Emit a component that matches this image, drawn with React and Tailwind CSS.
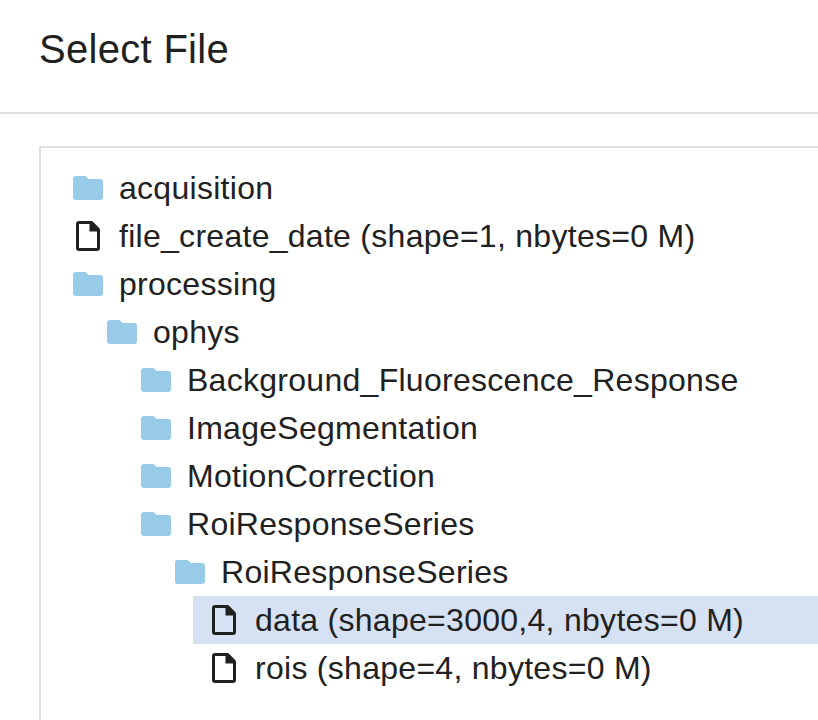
const rows = [
  { label: "acquisition", type: "folder", indent: "pl-[32px]" },
  { label: "file_create_date (shape=1, nbytes=0 M)", type: "file", indent: "pl-[32px]" },
  { label: "processing", type: "folder", indent: "pl-[32px]" },
  { label: "ophys", type: "folder", indent: "pl-[66px]" },
  { label: "Background_Fluorescence_Response", type: "folder", indent: "pl-[100px]" },
  { label: "ImageSegmentation", type: "folder", indent: "pl-[100px]" },
  { label: "MotionCorrection", type: "folder", indent: "pl-[100px]" },
  { label: "RoiResponseSeries", type: "folder", indent: "pl-[100px]" },
  { label: "RoiResponseSeries", type: "folder", indent: "pl-[134px]" },
  { label: "data (shape=3000,4, nbytes=0 M)", type: "file", indent: "ml-[152px] pl-[16px]", selected: true },
  { label: "rois (shape=4, nbytes=0 M)", type: "file", indent: "pl-[168px]" },
];

function FolderIcon() {
  return (
    <svg className="h-[30px] w-[30px] shrink-0" viewBox="0 0 30 30">
      <path
        fill="#97cbe7"
        d="M3 3h8.7c.8 0 1.4.3 2 .9L15.8 6H27a3 3 0 0 1 3 3v15a3 3 0 0 1-3 3H3a3 3 0 0 1-3-3V6a3 3 0 0 1 3-3z"
      />
    </svg>
  );
}

function FileIcon() {
  return (
    <svg className="h-[30px] w-[30px] shrink-0" viewBox="0 0 30 30">
      <path
        fill="#202020"
        fillRule="evenodd"
        d="M6 0H18.3Q19.2 0 19.8 .6L26.4 7.2Q27 7.8 27 8.7V27A3 3 0 0 1 24 30H6A3 3 0 0 1 3 27V3A3 3 0 0 1 6 0zM6 3V27H24V10.5H16.5V3z"
      />
    </svg>
  );
}

function TreeRow({ label, type, indent, selected }) {
  return (
    <div className={`flex h-[48px] items-center ${indent} ${selected ? "bg-[#d6e2f4]" : ""}`}>
      {type === "folder" ? <FolderIcon /> : <FileIcon />}
      <span className="ml-[16px] whitespace-nowrap text-[32px] leading-[48px] tracking-[0.28px]">{label}</span>
    </div>
  );
}

export default function App() {
  return (
    <div className="h-[720px] w-full overflow-hidden bg-white font-['Liberation_Sans',Arial,sans-serif] text-[#212121]">
      <header className="flex h-[114px] items-start border-b-2 border-[#e0e0e0] pl-[39px] pt-[17px]">
        <h1 className="text-[40px] leading-[64px] tracking-[0.3px]">Select File</h1>
      </header>
      <main className="pl-[39px] pt-[32px]">
        <div className="h-[600px] border-l-2 border-t-2 border-[#e0e0e0] pt-[16px]">
          {rows.map((row, i) => (
            <TreeRow key={i} {...row} />
          ))}
        </div>
      </main>
    </div>
  );
}
